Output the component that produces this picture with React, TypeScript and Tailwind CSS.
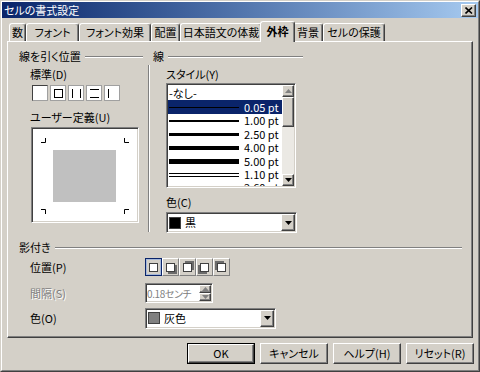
import React from 'react';

const raised =
  'border border-t-white border-l-white border-r-[#404040] border-b-[#404040] shadow-[inset_-1px_-1px_0_#808080]';
const sunken =
  'border border-t-[#808080] border-l-[#808080] border-r-white border-b-white shadow-[inset_1px_1px_0_#404040,inset_-1px_-1px_0_#d4d0c8]';

const GroupTitle = ({ label, className = '' }: { label: string; className?: string }) => (
  <div className={`flex items-center h-[13px] ${className}`}>
    <span>{label}</span>
    <div className="flex-1 ml-[4px] h-[2px] border-t border-t-[#808080] border-b border-b-white" />
  </div>
);

const Arrow = ({ up = false, color = '#000' }: { up?: boolean; color?: string }) => (
  <svg width="7" height="4" viewBox="0 0 7 4">
    <path d={up ? 'M3.5 0 L7 4 L0 4 Z' : 'M0 0 L7 0 L3.5 4 Z'} fill={color} />
  </svg>
);

const Dropdown = ({ swatch, label, className = '' }: { swatch: string; label: string; className?: string }) => (
  <div className={`flex items-center w-[131px] h-[21px] bg-white ${sunken} ${className}`}>
    <div className="ml-[2px] w-[12px] h-[12px] border border-[#404040]" style={{ background: swatch }} />
    <span className="ml-[4px] flex-1">{label}</span>
    <div className={`w-[14px] h-[17px] mr-[1px] flex items-center justify-center bg-[#d4d0c8] ${raised}`}>
      <Arrow />
    </div>
  </div>
);

const tabs = [
  { label: '数', w: 'w-[17px]' },
  { label: 'フォント', w: 'w-[53px]' },
  { label: 'フォント効果', w: 'w-[72px]' },
  { label: '配置', w: 'w-[29px]' },
  { label: '日本語文の体裁', w: 'w-[82px]' },
  { label: '外枠', w: 'w-[35px]', active: true },
  { label: '背景', w: 'w-[30px]' },
  { label: 'セルの保護', w: 'w-[62px]' },
];

const styles = [
  { h: 'h-[14px]', line: 'h-[1px]', label: '0.05 pt', selected: true },
  { h: 'h-[13px]', line: 'h-[2px]', label: '1.00 pt' },
  { h: 'h-[14px]', line: 'h-[3px]', label: '2.50 pt' },
  { h: 'h-[13px]', line: 'h-[4px]', label: '4.00 pt' },
  { h: 'h-[14px]', line: 'h-[5px]', label: '5.00 pt' },
  { h: 'h-[13px]', line: 'double', label: '1.10 pt' },
  { h: 'h-[13px]', line: 'double', label: '2.60 pt' },
];

const presetIcons = [
  null,
  <rect key="a" x="3.5" y="3.5" width="8" height="8" fill="none" stroke="#000" />,
  <path key="b" d="M3.5 3 V12 M11.5 3 V12" stroke="#000" />,
  <path key="c" d="M3 3.5 H12 M3 11.5 H12" stroke="#000" />,
  <path key="d" d="M3.5 3 V12" stroke="#000" />,
];

const shadowOffsets = [null, [2, 2], [2, -2], [-2, 2], [-2, -2]];

export default function App() {
  return (
    <div className="w-[480px] h-[372px] bg-[#d4d0c8] border border-t-[#d4d0c8] border-l-[#d4d0c8] border-r-[#404040] border-b-[#404040] text-[11px] leading-[13px] text-black font-['Noto_Sans_CJK_JP','Noto_Sans',sans-serif] [font-feature-settings:'palt']">
      <div className="h-full flex flex-col border border-t-white border-l-white border-r-[#808080] border-b-[#808080]">
        {/* title bar */}
        <div className="h-[16px] flex items-center bg-linear-to-r from-[#0a246a] to-[#a6caf0]">
          <span className="ml-[2px] text-white">セルの書式設定</span>
          <div className={`ml-auto mr-[2px] w-[15px] h-[13px] bg-[#d4d0c8] flex items-center justify-center ${raised}`}>
            <svg width="8" height="7" viewBox="0 0 8 7">
              <path d="M0.5 0.5 L7 6.5 M7 0.5 L0.5 6.5" stroke="#000" strokeWidth="1.6" />
            </svg>
          </div>
        </div>

        {/* tabs */}
        <div className="mt-[3px] ml-[5px] pl-[2px] h-[20px] flex items-end">
          {tabs.map((t) => (
            <div
              key={t.label}
              className={`${t.w} flex items-center justify-center rounded-t-[3px] border-t border-l border-r border-t-white border-l-white border-r-[#404040] shadow-[inset_-1px_0_0_#808080] bg-[#d4d0c8] whitespace-nowrap ${
                t.active ? 'h-[21px] -mx-[2px] -mb-[1px] relative z-10 font-bold pb-[2px]' : 'h-[18px]'
              }`}
            >
              {t.label}
            </div>
          ))}
        </div>

        {/* panel */}
        <div className="mx-[5px] h-[297px] border border-t-white border-l-white border-r-[#404040] border-b-[#404040] shadow-[inset_-1px_-1px_0_#808080] pl-[11px] pr-[10px] pt-[8px]">
          <div className="flex items-start">
            {/* left column */}
            <div className="w-[124px] flex flex-col">
              <GroupTitle label="線を引く位置" />
              <div className="ml-[11px] mt-[5px]">標準(D)</div>
              <div className="ml-[13px] mt-[4px] flex gap-[2px]">
                {presetIcons.map((icon, i) => (
                  <div
                    key={i}
                    className={`w-[16px] h-[16px] bg-white border ${
                      i === 0 ? 'border-t-[#404040] border-l-[#404040] border-r-[#a0a0a0] border-b-[#a0a0a0]' : 'border-[#a0a0a0]'
                    }`}
                  >
                    <svg width="14" height="14" viewBox="0 0 14 14">
                      {icon}
                    </svg>
                  </div>
                ))}
              </div>
              <div className="ml-[11px] mt-[10px]">ユーザー定義(U)</div>
              <div className={`ml-[12px] mt-[3px] w-[108px] h-[96px] bg-white ${sunken}`}>
                <svg width="104" height="92" viewBox="0 0 104 92" className="m-[1px]">
                  <rect x="20" y="21" width="63" height="52" fill="#c0c0c0" />
                  <path
                    d="M8 13.5 H12.5 V9 M96 13.5 H91.5 V9 M8 80.5 H12.5 V85 M96 80.5 H91.5 V85"
                    stroke="#000"
                    fill="none"
                  />
                </svg>
              </div>
            </div>

            {/* separator */}
            <div className="ml-[5px] mt-[15px] h-[167px] w-[2px] border-l border-l-[#808080] border-r border-r-white" />

            {/* right column */}
            <div className="ml-[3px] w-[150px] flex flex-col">
              <GroupTitle label="線" />
              <div className="ml-[13px] mt-[5px]">スタイル(Y)</div>
              <div className={`ml-[13px] mt-[2px] w-[130px] h-[105px] bg-white flex p-[1px] ${sunken}`}>
                <div className="flex-1 overflow-hidden pt-[1px] leading-[11px]">
                  <div className="h-[14px] flex items-center pl-[1px]">-なし-</div>
                  {styles.map((s) => (
                    <div
                      key={s.label}
                      className={`${s.h} flex items-center pl-[1px] ${s.selected ? 'bg-[#0a246a] text-white' : ''}`}
                    >
                      {s.line === 'double' ? (
                        <div className="w-[70px] h-[4px] border-t border-b border-black" />
                      ) : (
                        <div className={`w-[70px] ${s.line} bg-black`} />
                      )}
                      <span className="ml-[5px]">{s.label}</span>
                    </div>
                  ))}
                </div>
                <div className="w-[12px] flex flex-col bg-[#ebe9e4]">
                  <div className={`h-[12px] bg-[#d4d0c8] flex items-center justify-center ${raised}`}>
                    <Arrow up color="#808080" />
                  </div>
                  <div className={`h-[30px] bg-[#d4d0c8] ${raised}`} />
                  <div className="flex-1" />
                  <div className={`h-[12px] bg-[#d4d0c8] flex items-center justify-center ${raised}`}>
                    <Arrow />
                  </div>
                </div>
              </div>
              <div className="ml-[13px] mt-[8px]">色(C)</div>
              <Dropdown swatch="#000000" label="黒" className="ml-[13px] mt-[3px]" />
            </div>
          </div>

          {/* shadow */}
          <GroupTitle label="影付き" className="mt-[8px]" />
          <div className="flex items-center mt-[4px] h-[18px]">
            <div className="ml-[11px] w-[115px]">位置(P)</div>
            <div className="flex">
              {shadowOffsets.map((o, i) => (
                <div
                  key={i}
                  className={`w-[17px] h-[18px] flex items-center justify-center ${
                    i === 0
                      ? 'border border-[#0a246a] shadow-[inset_0_0_0_1px_#a6b8d8] bg-[#d4d0c8]'
                      : 'border border-t-white border-l-white border-r-[#808080] border-b-[#808080]'
                  }`}
                >
                  <svg width="13" height="13" viewBox="0 0 13 13">
                    {o && <rect x={2 + o[0]} y={2 + o[1]} width="9" height="9" fill="#6b6b6b" />}
                    <rect x="2.5" y="2.5" width="8" height="8" fill="#fff" stroke="#404040" />
                  </svg>
                </div>
              ))}
            </div>
          </div>
          <div className="flex items-center mt-[7px] h-[20px]">
            <div className="ml-[11px] w-[115px] text-[#808080] [text-shadow:1px_1px_0_#fff]">間隔(S)</div>
            <div className={`w-[68px] h-[20px] bg-white flex items-center ${sunken}`}>
              <span className="ml-[1px] flex-1 text-[10px] tracking-[-0.4px] text-[#808080] whitespace-nowrap">0.18センチ</span>
              <div className="w-[12px] h-[16px] mr-[1px] flex flex-col shrink-0">
                <div className={`h-[8px] bg-[#d4d0c8] flex items-center justify-center ${raised}`}>
                  <Arrow up color="#808080" />
                </div>
                <div className={`h-[8px] bg-[#d4d0c8] flex items-center justify-center ${raised}`}>
                  <Arrow color="#808080" />
                </div>
              </div>
            </div>
          </div>
          <div className="flex items-center mt-[5px] h-[20px]">
            <div className="ml-[11px] w-[115px]">色(O)</div>
            <Dropdown swatch="#808080" label="灰色" />
          </div>
        </div>

        {/* buttons */}
        <div className="mt-[5px] mr-[4px] flex justify-end gap-[5px]">
          <button className="w-[68px] h-[21px] border border-black bg-[#d4d0c8]">
            <div className={`w-full h-full flex items-center justify-center ${raised}`}>OK</div>
          </button>
          <button className={`w-[68px] h-[21px] bg-[#d4d0c8] ${raised}`}>キャンセル</button>
          <button className={`w-[68px] h-[21px] bg-[#d4d0c8] ${raised}`}>ヘルプ(H)</button>
          <button className={`w-[68px] h-[21px] bg-[#d4d0c8] ${raised}`}>リセット(R)</button>
        </div>
      </div>
    </div>
  );
}
